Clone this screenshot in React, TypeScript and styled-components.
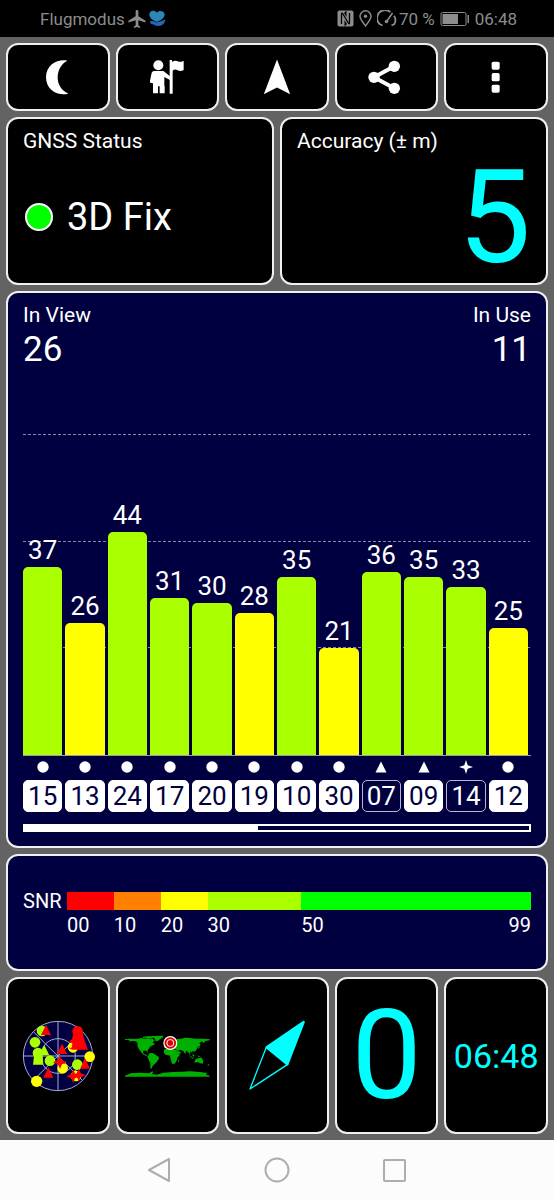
import React from "react";
import styled, { createGlobalStyle } from "styled-components";

const NAVY = "#000040";
const CYAN = "#00ffff";
const LIME = "#aaff00";
const YELLOW = "#ffff00";
const FRAME = "#f0f0f0";

const GlobalStyle = createGlobalStyle`
  * { box-sizing: border-box; }
  body { margin: 0; background: #636363; }
  button { font: inherit; color: inherit; cursor: pointer; }
`;

const Screen = styled.div`
  min-height: 100vh;
  display: flex;
  flex-direction: column;
  background: #636363;
  color: #fff;
  font-family: Roboto, "Liberation Sans", sans-serif;
`;

const StatusBar = styled.header`
  display: flex;
  justify-content: space-between;
  align-items: center;
  height: 37px;
  padding: 0 37px 0 40px;
  background: #000;
  color: #8c8c8c;
  font-size: 17px;
  line-height: 20px;
`;

const StatusGroup = styled.div<{ $gap: number }>`
  display: flex;
  align-items: center;
  gap: ${(p) => p.$gap}px;
`;

const Dashboard = styled.main`
  flex: 1;
  display: flex;
  flex-direction: column;
  gap: 6px;
  padding: 6px;
`;

const TileRow = styled.div<{ $columns: number; $height: number }>`
  display: grid;
  grid-template-columns: repeat(${(p) => p.$columns}, minmax(0, 1fr));
  gap: 6px;
  min-height: ${(p) => p.$height}px;
`;

const TileButton = styled.button`
  display: flex;
  align-items: center;
  justify-content: center;
  padding: 0;
  overflow: hidden;
  background: #000;
  border: 2px solid ${FRAME};
  border-radius: 12px;
`;

const Card = styled.section<{ $navy?: boolean }>`
  display: flex;
  flex-direction: column;
  padding: 9px 15px 0;
  background: ${(p) => (p.$navy ? NAVY : "#000")};
  border: 2px solid ${FRAME};
  border-radius: 12px;
`;

const SatelliteCard = styled(Card)`
  flex: 1;
  padding-bottom: 14px;
`;

const LegendCard = styled(Card)`
  justify-content: center;
  min-height: 117px;
  padding: 0 15px;
`;

const Label = styled.h2`
  margin: 0;
  font-size: 21px;
  font-weight: 400;
  line-height: 26px;
`;

const FixState = styled.div`
  flex: 1;
  display: flex;
  align-items: center;
  gap: 14px;
  padding: 0 0 4px 2px;
  font-size: 38px;
  line-height: 46px;
`;

const FixDot = styled.span`
  width: 28px;
  height: 28px;
  border: 2px solid #fff;
  border-radius: 50%;
  background: #00ff00;
`;

const AccuracyValue = styled.div`
  text-align: right;
  color: ${CYAN};
  font-size: 130px;
  line-height: 128px;
`;

const Counters = styled.div`
  display: flex;
  justify-content: space-between;
`;

const Counter = styled.div<{ $end?: boolean }>`
  text-align: ${(p) => (p.$end ? "right" : "left")};
`;

const Count = styled.div`
  font-size: 35px;
  line-height: 44px;
`;

const Chart = styled.div`
  margin-top: auto;
`;

const Plot = styled.div`
  position: relative;
  height: 321px;
  border-bottom: 1px solid #9a9aa8;
`;

const GridLine = styled.div<{ $level: number }>`
  position: absolute;
  left: 0;
  right: 1px;
  bottom: calc(100% * ${(p) => p.$level} / 3);
  height: 1px;
  background: repeating-linear-gradient(90deg, #8686a6 0 3px, transparent 3px 5px);
`;

const Columns = styled.ul`
  position: relative;
  display: grid;
  grid-template-columns: repeat(12, minmax(0, 1fr));
  gap: 3px;
  height: 100%;
  margin: 0;
  padding: 0 3px 0 0;
  list-style: none;
`;

const BarColumn = styled.li`
  display: flex;
  flex-direction: column;
  justify-content: flex-end;
  height: 100%;
  text-align: center;
  font-size: 26px;
  line-height: 34px;
`;

const Bar = styled.div<{ $value: number }>`
  height: ${(p) => (p.$value / 63) * 100}%;
  border-radius: 5px 5px 0 0;
  background: ${(p) => (p.$value >= 30 ? LIME : YELLOW)};
`;

const Satellite = styled.li`
  display: flex;
  flex-direction: column;
`;

const Mark = styled.span`
  display: flex;
  align-items: center;
  justify-content: center;
  height: 24px;
  padding-bottom: 2px;
`;

const SatelliteId = styled.span<{ $used: boolean }>`
  height: 32px;
  border: 1px solid ${(p) => (p.$used ? "#fff" : "#b8b8cc")};
  border-radius: 5px;
  background: ${(p) => (p.$used ? "#fff" : NAVY)};
  color: ${(p) => (p.$used ? NAVY : "#fff")};
  text-align: center;
  font-size: 26px;
  line-height: 30px;
`;

const PageTrack = styled.div`
  height: 8px;
  margin: 12px 0 0;
  border: 2px solid #fff;
`;

const PageThumb = styled.div`
  height: 100%;
  background: #fff;
`;

const Legend = styled.div`
  display: grid;
  grid-template-columns: 44px minmax(0, 1fr);
  align-items: center;
  font-size: 20px;
  line-height: 24px;
`;

const Scale = styled.div`
  grid-column: 2;
  display: grid;
  grid-template-columns: 10fr 10fr 10fr 20fr 49fr;
`;

const Swatch = styled.span<{ $color: string }>`
  height: 18px;
  background: ${(p) => p.$color};
`;

const Tick = styled.span`
  display: flex;
  justify-content: space-between;
`;

const BigValue = styled.span<{ $size: number }>`
  color: ${CYAN};
  font-size: ${(p) => p.$size}px;
  line-height: 1;
`;

const SystemNav = styled.nav`
  display: flex;
  justify-content: center;
  height: 60px;
  background: #fcfcfc;
`;

const SystemButton = styled.button`
  display: flex;
  align-items: center;
  justify-content: center;
  width: 118px;
  padding: 0;
  border: 0;
  background: none;
`;

type Kind = "circle" | "triangle" | "star";

const satellites: { id: string; snr: number; kind: Kind; used: boolean }[] = [
  { id: "15", snr: 37, kind: "circle", used: true },
  { id: "13", snr: 26, kind: "circle", used: true },
  { id: "24", snr: 44, kind: "circle", used: true },
  { id: "17", snr: 31, kind: "circle", used: true },
  { id: "20", snr: 30, kind: "circle", used: true },
  { id: "19", snr: 28, kind: "circle", used: true },
  { id: "10", snr: 35, kind: "circle", used: true },
  { id: "30", snr: 21, kind: "circle", used: true },
  { id: "07", snr: 36, kind: "triangle", used: false },
  { id: "09", snr: 35, kind: "triangle", used: true },
  { id: "14", snr: 33, kind: "star", used: false },
  { id: "12", snr: 25, kind: "circle", used: true },
];

const KindMark = ({ kind }: { kind: Kind }) => (
  <svg width="14" height="14" viewBox="-7 -7 14 14" fill="#fff" aria-hidden="true">
    {kind === "circle" && <circle r="5.7" />}
    {kind === "triangle" && <path d="M0 -5.5L5.5 5.5H-5.5Z" />}
    {kind === "star" && <path d="M0 -7L1.7 -1.7L7 0L1.7 1.7L0 7L-1.7 1.7L-7 0L-1.7 -1.7Z" />}
  </svg>
);

const MoonIcon = () => (
  <svg width="40" height="40" viewBox="114 171 120 120" fill="#fff" aria-hidden="true">
    <path d="M202 182C178 176 138 190 138 232C138 274 178 289 205 281C184 272 173 254 173 232C173 210 184 191 202 182Z" />
  </svg>
);

const GuideIcon = () => (
  <svg width="40" height="40" viewBox="442 171 120 120" fill="#fff" aria-hidden="true">
    <circle cx="476" cy="196" r="15" />
    <path d="M463 213H489Q493 213 496 217L511 229V240L494 231V257Q496 259 495 262V280H480V259H475V280H460V250L452 248Q450 246 451 242L456 218Q458 213 463 213Z" />
    <path d="M510 180H517V186Q526 180 534 184T552 182V210Q543 216 534 211T519 212V281H510Z" />
  </svg>
);

const ArrowIcon = () => (
  <svg width="40" height="40" viewBox="0 0 40 40" fill="#fff" aria-hidden="true">
    <path d="M20 2.500L33.200 37.300L20 30.500L6.800 37.300Z" />
  </svg>
);

const ShareIcon = () => (
  <svg width="40" height="40" viewBox="269 171 120 120" aria-hidden="true">
    <path d="M351 199L290 232L351 265" fill="none" stroke="#fff" strokeWidth="12" />
    <g fill="#fff">
      <circle cx="290" cy="232" r="17" />
      <circle cx="351" cy="199" r="17" />
      <circle cx="351" cy="265" r="17" />
    </g>
  </svg>
);

const MoreIcon = () => (
  <svg width="40" height="40" viewBox="598 171 120 120" fill="#fff" aria-hidden="true">
    <rect x="645" y="185" width="24" height="24" rx="5" />
    <rect x="645" y="219" width="24" height="25" rx="5" />
    <rect x="645" y="254" width="24" height="24" rx="5" />
  </svg>
);

const RadarIcon = () => {
  const tri = (x: number, y: number) => `M${x} ${y - 17}L${x + 15} ${y + 14}H${x - 15}Z`;
  const star = (x: number, y: number) =>
    `M${x} ${y - 20}L${x + 6} ${y - 6}L${x + 22} ${y}L${x + 6} ${y + 6}L${x} ${y + 20}L${x - 6} ${y + 6}L${x - 22} ${y}L${x - 6} ${y - 6}Z`;
  return (
    <svg width="76" height="72" viewBox="60 148 228 216" aria-hidden="true">
      <circle cx="174" cy="256" r="104" fill={NAVY} />
      <g fill="none" stroke="#a8a8d8" strokeWidth="3">
        <circle cx="174" cy="256" r="104" />
        <circle cx="174" cy="256" r="52" />
        <path d="M70 256H278M174 152V360M100 183L247 329M247 183L100 329" />
      </g>
      <g fill={LIME}>
        <circle cx="126" cy="181" r="16" />
        <circle cx="105" cy="215" r="16" />
        <circle cx="114" cy="247" r="16" />
        <circle cx="150" cy="270" r="16" />
        <circle cx="232" cy="282" r="16" />
        <path d={`${tri(133, 240)}${tri(114, 268)}M102 256H128L130 282H99Z`} />
      </g>
      <g fill={YELLOW}>
        <circle cx="219" cy="230" r="16" />
        <circle cx="188" cy="293" r="16" />
        <circle cx="228" cy="316" r="16" />
        <circle cx="269" cy="258" r="16" />
        <circle cx="110" cy="332" r="17" />
      </g>
      <g fill="#ff0000">
        <circle cx="233" cy="182" r="16" />
        <path d="M220 188L248 188L256 216L264 237H218L206 232L218 220L208 212L216 206Z" />
        <path d={`${tri(138, 179)}${tri(186, 236)}${tri(145, 307)}${tri(255, 280)}`} />
        <path d={`${star(180, 275)}${star(220, 317)}${star(236, 314)}`} />
      </g>
      <g fill={YELLOW}>
        <circle cx="211" cy="227" r="5" />
        <circle cx="229" cy="326" r="5" />
        <circle cx="226" cy="302" r="3" />
      </g>
    </svg>
  );
};

const WorldIcon = () => (
  <svg width="88" height="44" viewBox="39 192 264 132" aria-hidden="true">
    <g fill="#00b000">
      <path d="M45 207H50L57 206L72 207L84 206L94 204L104 206L114 204L122 208L128 206L134 213L128 216L131 220L136 222L128 226L120 230L117 236L112 241L115 248L108 242L100 242L99 248L104 253L110 256L116 260L110 259L98 252L92 244L86 236L82 228L83 220L78 214L68 213L58 215L60 212L52 209L45 210Z" />
      <path d="M98 200L120 198L130 201L124 206L110 203L100 204Z" />
      <path d="M122 198L158 197L160 202L152 206L142 214L136 212L134 205L126 201Z" />
      <path d="M118 250L128 249L136 254L147 261L146 268L140 276L134 282L128 288L124 297L121 294L121 280L115 268L113 260Z" />
      <path d="M163 238L176 234L188 238L199 240L206 252L210 254L202 264L200 272L194 281L186 281L182 268L180 257L166 254L161 247Z" />
      <path d="M204 272L208 267L206 278Z" />
      <path d="M162 234L163 226L172 221L168 215L172 208L184 204L196 208L210 207L226 203L240 204L256 206L276 206L300 208L299 211L286 213L280 220L276 214L268 219L272 226L263 231L258 242L252 245L248 242L246 248L240 244L241 254L234 246L228 242L226 253L220 243L212 240L204 240L214 250L206 252L200 240L190 234L182 232L176 230L168 234Z" />
      <path d="M236 253L245 262L252 264L248 266L240 260ZM246 252L254 256L250 261ZM262 256L274 262L266 261ZM264 232L270 228L266 238Z" />
      <path d="M254 271L262 265L270 264L273 262L280 272L278 281L270 280L264 276L254 278ZM292 286L298 280L295 288Z" />
      <path d="M45 317L62 310L90 308L116 310L128 304L130 308L124 312L140 314L160 308L190 306L215 305L240 304L270 306L292 309L288 314L299 317V320H45Z" />
    </g>
    <circle cx="181" cy="219" r="21" fill="#fff" />
    <circle cx="181" cy="219" r="17.500" fill="#e00000" />
    <circle cx="181" cy="219" r="10.500" fill="none" stroke="#fff" strokeWidth="3" />
  </svg>
);

const CompassIcon = () => (
  <svg width="58" height="71" viewBox="414 150 174 213" stroke={CYAN} strokeLinejoin="round" aria-hidden="true">
    <path d="M581 156L470 232L532 283Z" fill={CYAN} strokeWidth="7" />
    <path d="M469 232L420 357L533 283Z" fill="none" strokeWidth="4" />
  </svg>
);

const PlaneIcon = () => (
  <svg width="18" height="18" viewBox="2 2 19 20" fill="currentColor" aria-hidden="true">
    <path d="M21 16v-2l-8-5V3.500a1.500 1.500 0 0 0-3 0V9l-8 5v2l8-2.500V19l-2 1.500V22l3.500-1 3.500 1v-1.500L13 19v-5.500z" />
  </svg>
);

const HeartHandIcon = () => (
  <svg width="17" height="17" viewBox="449 33 50 50" aria-hidden="true">
    <path d="M473 68C456 62 450 54 450 46C450 35 465 31 472 41C479 31 496 36 495 47C494 57 484 63 473 68Z" fill="#2c86b8" />
    <path d="M452 66Q462 63 472 70L498 61Q496 71 488 77Q474 84 462 76L453 73Z" fill="#2468b4" />
  </svg>
);

const NfcIcon = () => (
  <svg width="17" height="17" viewBox="0 0 17 17" aria-hidden="true">
    <rect x=".5" y=".5" width="16" height="16" rx="2" fill="#8c8c8c" />
    <path d="M4.500 14V4.500Q4.500 2 6 4L11 12.500Q12.500 15 12.500 12.500V3" fill="none" stroke="#000" strokeWidth="1.300" />
    <path d="M7.500 16.500V10L10 14ZM9.500 .5V7L7 3Z" fill="#000" />
  </svg>
);

const PinIcon = () => (
  <svg width="13" height="17" viewBox="0 0 13 17" fill="none" stroke="#8c8c8c" strokeWidth="1.500" aria-hidden="true">
    <path d="M6.500 16C3 11.500 1 9 1 6.300A5.500 5.500 0 0 1 12 6.300C12 9 10 11.500 6.500 16Z" />
    <circle cx="6.500" cy="6.300" r="1.700" fill="#8c8c8c" stroke="none" />
  </svg>
);

const GaugeIcon = () => (
  <svg width="20" height="17" viewBox="0 0 20 17" fill="none" stroke="#8c8c8c" strokeWidth="1.800" aria-hidden="true">
    <path d="M5.500 15.500L2.600 14A8 8 0 0 1 13.500 2.200M17 5.800A8 8 0 0 1 17.400 14L14.500 15.500" />
    <path d="M15.500 3L10 11" strokeWidth="1.600" />
    <circle cx="9.500" cy="11.500" r="1.800" fill="#8c8c8c" stroke="none" />
  </svg>
);

const BatteryIcon = () => (
  <svg width="30" height="16" viewBox="0 0 30 16" aria-hidden="true">
    <rect x="1" y="1.500" width="25" height="13" rx="1.500" fill="none" stroke="#8c8c8c" />
    <rect x="2.500" y="3" width="15.500" height="10" fill="#8c8c8c" />
    <rect x="27.500" y="4" width="1.500" height="8" fill="#8c8c8c" />
  </svg>
);

const legendColors = ["#ff0000", "#ff8000", YELLOW, LIME, "#00ff00"];

const tools = [
  { name: "Night mode", icon: <MoonIcon /> },
  { name: "Guide", icon: <GuideIcon /> },
  { name: "Navigate", icon: <ArrowIcon /> },
  { name: "Share", icon: <ShareIcon /> },
  { name: "More options", icon: <MoreIcon /> },
];

export default function App() {
  return (
    <Screen>
      <GlobalStyle />
      <StatusBar>
        <StatusGroup $gap={3}>
          <span>Flugmodus</span>
          <PlaneIcon />
          <HeartHandIcon />
        </StatusGroup>
        <StatusGroup $gap={5}>
          <NfcIcon />
          <PinIcon />
          <StatusGroup $gap={2}>
            <GaugeIcon />
            <span>70 %</span>
          </StatusGroup>
          <BatteryIcon />
          <span>06:48</span>
        </StatusGroup>
      </StatusBar>

      <Dashboard>
        <TileRow $columns={5} $height={68}>
          {tools.map((tool) => (
            <TileButton key={tool.name} type="button" aria-label={tool.name}>
              {tool.icon}
            </TileButton>
          ))}
        </TileRow>

        <TileRow $columns={2} $height={168}>
          <Card>
            <Label>GNSS Status</Label>
            <FixState>
              <FixDot />
              3D Fix
            </FixState>
          </Card>
          <Card>
            <Label>Accuracy (± m)</Label>
            <AccuracyValue>5</AccuracyValue>
          </Card>
        </TileRow>

        <SatelliteCard $navy>
          <Counters>
            <Counter>
              <Label>In View</Label>
              <Count>26</Count>
            </Counter>
            <Counter $end>
              <Label>In Use</Label>
              <Count>11</Count>
            </Counter>
          </Counters>
          <Chart>
            <Plot>
              {[1, 2, 3].map((level) => (
                <GridLine key={level} $level={level} />
              ))}
              <Columns>
                {satellites.map((s) => (
                  <BarColumn key={s.id}>
                    <span>{s.snr}</span>
                    <Bar $value={s.snr} />
                  </BarColumn>
                ))}
              </Columns>
            </Plot>
            <Columns>
              {satellites.map((s) => (
                <Satellite key={s.id}>
                  <Mark>
                    <KindMark kind={s.kind} />
                  </Mark>
                  <SatelliteId $used={s.used}>{s.id}</SatelliteId>
                </Satellite>
              ))}
            </Columns>
            <PageTrack>
              <PageThumb style={{ width: `${(satellites.length / 26) * 100}%` }} />
            </PageTrack>
          </Chart>
        </SatelliteCard>

        <LegendCard $navy>
          <Legend>
            <span>SNR</span>
            <Scale>
              {legendColors.map((color) => (
                <Swatch key={color} $color={color} />
              ))}
            </Scale>
            <Scale>
              <Tick>00</Tick>
              <Tick>10</Tick>
              <Tick>20</Tick>
              <Tick>30</Tick>
              <Tick>
                <span>50</span>
                <span>99</span>
              </Tick>
            </Scale>
          </Legend>
        </LegendCard>

        <TileRow $columns={5} $height={157}>
          <TileButton type="button" aria-label="Sky view">
            <RadarIcon />
          </TileButton>
          <TileButton type="button" aria-label="World map">
            <WorldIcon />
          </TileButton>
          <TileButton type="button" aria-label="Compass">
            <CompassIcon />
          </TileButton>
          <TileButton type="button">
            <BigValue $size={125}>0</BigValue>
          </TileButton>
          <TileButton type="button">
            <BigValue $size={34}>06:48</BigValue>
          </TileButton>
        </TileRow>
      </Dashboard>

      <SystemNav>
        <SystemButton type="button" aria-label="Back">
          <svg width="26" height="28" viewBox="0 0 26 28" fill="none" stroke="#adadad" strokeWidth="2" strokeLinejoin="round" aria-hidden="true">
            <path d="M23 3V25L3 14Z" />
          </svg>
        </SystemButton>
        <SystemButton type="button" aria-label="Home">
          <svg width="28" height="28" viewBox="0 0 28 28" fill="none" stroke="#adadad" strokeWidth="2" aria-hidden="true">
            <circle cx="14" cy="14" r="11.500" />
          </svg>
        </SystemButton>
        <SystemButton type="button" aria-label="Recent apps">
          <svg width="28" height="28" viewBox="0 0 28 28" fill="none" stroke="#adadad" strokeWidth="2" aria-hidden="true">
            <rect x="3" y="4" width="21" height="21" rx="1" />
          </svg>
        </SystemButton>
      </SystemNav>
    </Screen>
  );
}
